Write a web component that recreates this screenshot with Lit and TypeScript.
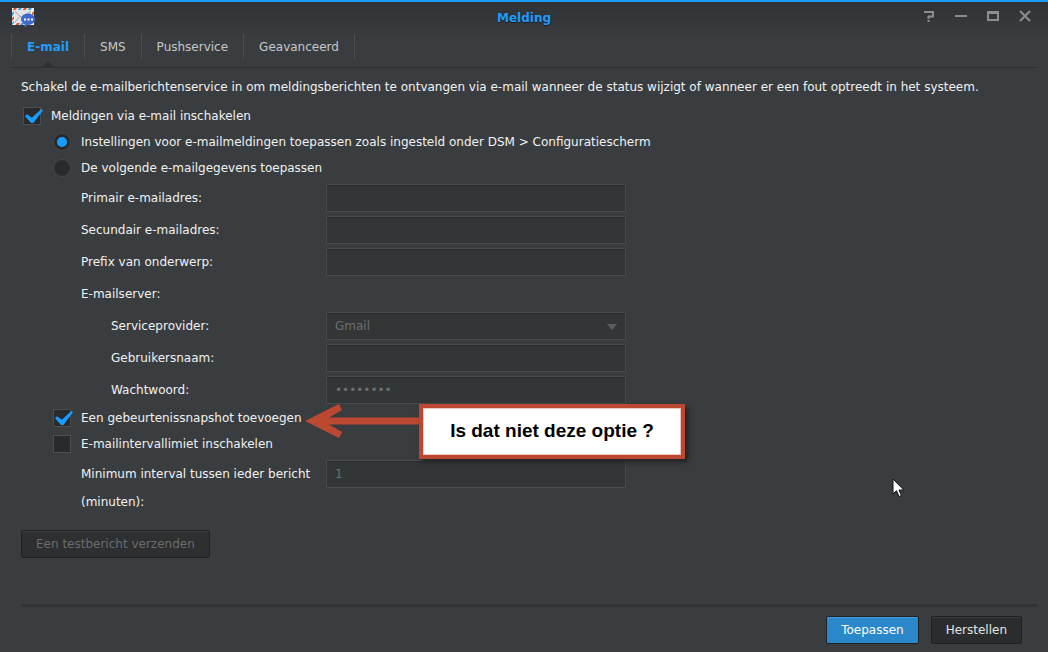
import { LitElement, html, css, svg } from "lit";
import { customElement, property, state } from "lit/decorators.js";

interface Field {
  id: string;
  label: string;
  type: string;
  value: string;
  nested?: boolean;
}

const ACCOUNT_FIELDS: Field[] = [
  { id: "primary", label: "Primair e-mailadres:", type: "email", value: "" },
  { id: "secondary", label: "Secundair e-mailadres:", type: "email", value: "" },
  { id: "prefix", label: "Prefix van onderwerp:", type: "text", value: "" },
];

const SERVER_FIELDS: Field[] = [
  { id: "username", label: "Gebruikersnaam:", type: "text", value: "", nested: true },
  { id: "password", label: "Wachtwoord:", type: "password", value: "wachtwrd", nested: true },
];

@customElement("window-header")
class WindowHeader extends LitElement {
  @property() heading = "";

  static styles = css`
    :host {
      display: grid;
      grid-template-columns: 1fr auto 1fr;
      align-items: center;
      height: 34px;
      padding: 0 11px;
      border-top: 2px solid #1a9cf8;
    }
    .app-icon {
      display: block;
    }
    h1 {
      margin: 0;
      font-size: 12px;
      line-height: 16px;
      font-weight: bold;
      color: #1e9cff;
      text-shadow: 0 1px 1px #1a1c1e;
    }
    .tools {
      display: flex;
      justify-content: flex-end;
      gap: 16px;
      padding: 0 4px 4px 0;
    }
    button {
      width: 16px;
      height: 16px;
      padding: 0;
      border: 0;
      background: none;
      color: #8b8d8f;
    }
    button svg {
      display: block;
    }
  `;

  private tool(name: string, shape: unknown) {
    return html`<button type="button" aria-label=${name}>
      <svg width="16" height="16" viewBox="0 0 16 16" fill="none" stroke="currentColor">${shape}</svg>
    </button>`;
  }

  render() {
    return html`
      <svg class="app-icon" width="25" height="20" viewBox="0 0 25 20" aria-hidden="true">
        <rect x="1" y="0" width="22" height="17" fill="#f1f2f2" />
        <path d="M4 2h16v13H4z" fill="#e2e4e5" />
        <path d="M3 0h3L4.500 2h-3zM13 0h3l-1.500 2h-3zM1 10l2-2v3l-2 2zM21 5l2-2v3l-2 2zM6 15h3l-1.500 2h-3z" fill="#e0552f" />
        <path d="M8 0h3L9.500 2h-3zM18 0h3l-1.500 2h-3zM1 5l2-2v3l-2 2zM1 15l2-2v2l-2 2zM10 15h3l-1 2H9z" fill="#3da0e0" />
        <path d="M3.500 3l6.500 6q1.500 1.200 3 0L20 3M3.500 14.500L9 8.500" fill="none" stroke="#a5a8aa" />
        <path d="M17 5.500c4.200 0 7 2.600 7 5.800s-2.800 5.700-7 5.700l-3.500 2.500.2-3.300C11.300 15.200 10 13.300 10 11.300c0-3.200 2.800-5.800 7-5.800z" fill="#4069cf" />
        <path d="M13 10.500h2v2h-2zM16.500 10.500h2v2h-2zM20 10.500h2v2h-2z" fill="#fff" />
      </svg>
      <h1>${this.heading}</h1>
      <div class="tools">
        ${this.tool("Help", svg`<path d="M3 4h10M12 3v6M13 8.500H7M7.500 8v3M6.500 13h2" stroke-width="2" />`)}
        ${this.tool("Minimaliseren", svg`<path d="M2 8h12" stroke-width="2" />`)}
        ${this.tool("Maximaliseren", svg`<path d="M3 4h10v8H3z" stroke-width="2" /><path d="M2 4.500h12" stroke-width="3" />`)}
        ${this.tool("Sluiten", svg`<path d="M3 3l10 10M13 3L3 13" stroke-width="2" />`)}
      </div>
    `;
  }
}

@customElement("tab-strip")
class TabStrip extends LitElement {
  @property({ attribute: false }) tabs: string[] = [];
  @property({ type: Number }) selected = 0;

  static styles = css`
    :host {
      display: block;
      padding: 0 11px;
    }
    .tabs {
      display: flex;
      height: 33px;
      border-bottom: 1px solid #2c2f31;
    }
    button {
      position: relative;
      height: 25px;
      padding: 0 15px;
      border: 0;
      border-right: 1px solid #4b4e50;
      background: none;
      color: #c5c7c9;
      font: inherit;
      line-height: 24px;
    }
    button:first-child {
      border-left: 1px solid #4b4e50;
    }
    .active {
      color: #1e9cff;
      font-weight: bold;
    }
    .active::after {
      content: "";
      position: absolute;
      left: 50%;
      bottom: -8px;
      margin-left: -6px;
      border: 6px solid transparent;
      border-top: 0;
      border-bottom-color: #303335;
    }
  `;

  render() {
    return html`<div class="tabs" role="tablist">
      ${this.tabs.map(
        (name, i) => html`<button
          type="button"
          role="tab"
          class=${i === this.selected ? "active" : ""}
          aria-selected=${i === this.selected}
          @click=${() => (this.selected = i)}
        >${name}</button>`
      )}
    </div>`;
  }
}

@customElement("app-root")
class AppRoot extends LitElement {
  @state() private tabs = ["E-mail", "SMS", "Pushservice", "Geavanceerd"];

  static styles = css`
    :host {
      box-sizing: border-box;
      display: flex;
      flex-direction: column;
      min-height: 100vh;
      background: linear-gradient(#303335 2px, #3a3d3f 40px);
      color: #f0f1f2;
      font: 12px/28px "DejaVu Sans", Verdana, sans-serif;
    }
    * {
      box-sizing: border-box;
    }
    form {
      flex: 1;
      display: flex;
      flex-direction: column;
    }
    main {
      position: relative;
      flex: 1;
      padding: 5px 21px 0;
    }
    p {
      margin: 0;
      padding-bottom: 2px;
    }
    .option {
      display: flex;
      align-items: center;
      gap: 10px;
      height: 26px;
      padding-left: 2px;
    }
    .sub {
      padding-left: 32px;
    }
    .option input {
      appearance: none;
      position: relative;
      flex: none;
      width: 18px;
      height: 18px;
      margin: 0;
      border: 1px solid #4c4f52;
      background: #282a2b;
    }
    .option input[type="radio"] {
      border-radius: 50%;
      border-color: #45484a;
    }
    .option input:checked::before {
      content: "";
      position: absolute;
      background: #189cff;
    }
    .option input[type="radio"]:checked::before {
      inset: 3px;
      border-radius: 50%;
    }
    .option input[type="checkbox"]:checked::before {
      left: 1px;
      top: 1px;
      width: 18px;
      height: 14px;
      clip-path: polygon(0 52%, 11% 38%, 38% 62%, 91% 0, 100% 9%, 47% 100%, 34% 100%);
    }
    .fields {
      display: grid;
      grid-template-columns: 245px 300px;
      row-gap: 4px;
      padding-left: 60px;
    }
    .account {
      padding-top: 3px;
      padding-bottom: 1px;
    }
    .interval {
      padding-top: 3px;
    }
    .fields label,
    .group {
      padding-right: 8px;
    }
    .group {
      grid-column: 1 / -1;
    }
    .nested {
      padding-left: 30px;
    }
    .control {
      appearance: none;
      width: 100%;
      height: 28px;
      margin: 0;
      padding: 0 8px;
      border: 1px solid #484b4d;
      border-radius: 0;
      background: #333637;
      box-shadow: inset 0 1px 1px #2b2d2e;
      color: #6c6e70;
      font: inherit;
      line-height: 26px;
      opacity: 1;
    }
    .picker {
      position: relative;
    }
    .picker select {
      display: block;
    }
    .picker svg {
      position: absolute;
      right: 9px;
      top: 12px;
    }
    .button {
      height: 28px;
      padding: 0 14px;
      border: 1px solid #1f2122;
      border-radius: 2px;
      background: #2a2c2d;
      box-shadow: inset 0 1px 0 #3a3c3e;
      color: #e2e4e5;
      font: inherit;
      line-height: 26px;
    }
    .button:disabled {
      background: #2d2f31;
      color: #6a6c6e;
    }
    .primary {
      background: #2a87ca;
      box-shadow: inset 0 1px 0 #469bd8;
      color: #fff;
    }
    .test {
      margin-top: 14px;
    }
    footer {
      margin: 0 11px 0 21px;
      padding: 9px 15px 8px;
      display: flex;
      justify-content: flex-end;
      gap: 12px;
      border-top: 3px solid #313436;
    }
    .callout {
      position: absolute;
      left: 305px;
      top: 336px;
      display: flex;
    }
    .note {
      min-width: 266px;
      height: 55px;
      padding: 0 27px;
      border: 4px solid #bd4831;
      background: #fff;
      box-shadow: 3px 3px 5px #1f2122, inset 0 0 0 1px #eec4bb;
      color: #000;
      font: bold 19px/46px "Liberation Sans", Arial, sans-serif;
      text-align: center;
      white-space: nowrap;
    }
    .pointer {
      position: absolute;
      left: 892px;
      top: 410px;
    }
  `;

  private field(f: Field) {
    return html`
      <label for=${f.id} class=${f.nested ? "nested" : ""}>${f.label}</label>
      <input class="control" id=${f.id} type=${f.type} .value=${f.value} autocomplete="off" disabled />
    `;
  }

  render() {
    return html`
      <window-header heading="Melding"></window-header>
      <tab-strip .tabs=${this.tabs}></tab-strip>
      <form @submit=${(e: Event) => e.preventDefault()}>
        <main>
          <p>
            Schakel de e-mailberichtenservice in om meldingsberichten te ontvangen via e-mail wanneer de status wijzigt
            of wanneer er een fout optreedt in het systeem.
          </p>
          <label class="option"><input type="checkbox" checked />Meldingen via e-mail inschakelen</label>
          <label class="option sub"
            ><input type="radio" name="source" checked />Instellingen voor e-mailmeldingen toepassen zoals ingesteld
            onder DSM &gt; Configuratiescherm</label
          >
          <label class="option sub"><input type="radio" name="source" />De volgende e-mailgegevens toepassen</label>
          <div class="fields account">
            ${ACCOUNT_FIELDS.map((f) => this.field(f))}
            <div class="group">E-mailserver:</div>
            <label for="provider" class="nested">Serviceprovider:</label>
            <div class="picker">
              <select class="control" id="provider" disabled>
                <option>Gmail</option>
              </select>
              <svg width="10" height="6" viewBox="0 0 10 6" aria-hidden="true"><path d="M0 0h10L5 6z" fill="#5b5d5f" /></svg>
            </div>
            ${SERVER_FIELDS.map((f) => this.field(f))}
          </div>
          <label class="option sub"><input type="checkbox" checked />Een gebeurtenissnapshot toevoegen</label>
          <label class="option sub"><input type="checkbox" />E-mailintervallimiet inschakelen</label>
          <div class="fields interval">
            <label for="interval">Minimum interval tussen ieder bericht (minuten):</label>
            <input class="control" id="interval" type="text" value="1" disabled />
          </div>
          <button type="button" class="button test" disabled>Een testbericht verzenden</button>
          <div class="callout">
            <svg width="114" height="34" viewBox="0 0 114 34" aria-hidden="true">
              <path d="M0 17L34 0l3 6-13 7.500h90v7H24L37 28l-3 6z" fill="#bd4831" />
            </svg>
            <div class="note">Is dat niet deze optie ?</div>
          </div>
          <svg class="pointer" width="13" height="20" viewBox="0 0 13 20" aria-hidden="true">
            <path d="M1 1v15l3.500-3.300L7 18.500l2.500-1-2.500-5.500h4.800z" fill="#fff" stroke="#111" />
          </svg>
        </main>
        <footer>
          <button type="submit" class="button primary">Toepassen</button>
          <button type="reset" class="button">Herstellen</button>
        </footer>
      </form>
    `;
  }
}
